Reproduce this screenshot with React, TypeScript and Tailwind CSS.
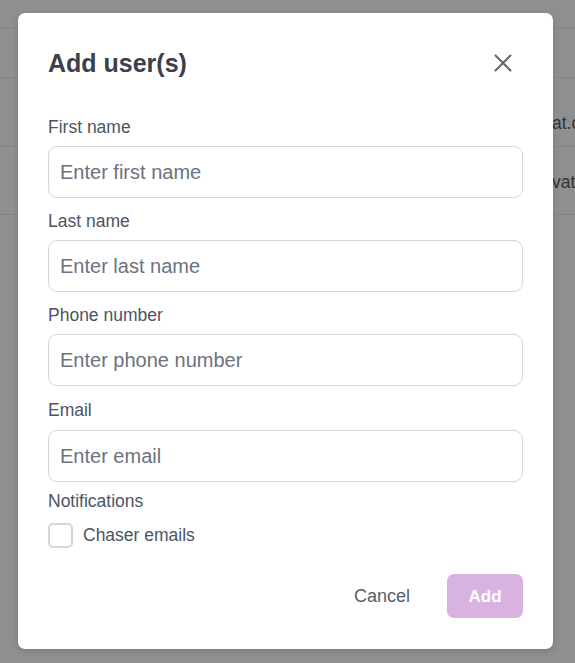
import React from "react";

const fields = [
  { label: "First name", placeholder: "Enter first name", extra: false },
  { label: "Last name", placeholder: "Enter last name", extra: false },
  { label: "Phone number", placeholder: "Enter phone number", extra: false },
  { label: "Email", placeholder: "Enter email", extra: true },
];

function Field({ label, placeholder, extra }: { label: string; placeholder: string; extra: boolean }) {
  return (
    <div className={extra ? "mt-px flex flex-col" : "flex flex-col"}>
      <label className="text-[17.5px] leading-6 text-[#4b5563]">{label}</label>
      <input
        placeholder={placeholder}
        className={`${extra ? "mt-2" : "mt-[7px]"} h-[52px] w-full rounded-[9px] border border-[#d3d7de] bg-white px-[11px] text-[20px] text-[#374151] placeholder:text-[#6b7280] outline-none`}
      />
    </div>
  );
}

export default function App() {
  return (
    <div className="relative h-[663px] w-[575px] overflow-hidden bg-[#8f8f8f] font-['Liberation_Sans',Arial,sans-serif]">
      {/* page behind the overlay */}
      <div className="flex flex-col">
        <div className="h-[29px] border-b border-[#858585]" />
        <div className="h-[49px] border-b border-[#858585]" />
        <div className="flex h-[69px] items-center border-b border-[#858585] pl-[552px] pt-[22px] whitespace-nowrap text-[17.5px] text-[#333]">
          at.c
        </div>
        <div className="flex h-[68px] items-center border-b border-[#858585] pl-[552px] pt-1 whitespace-nowrap text-[17.5px] text-[#333]">
          vat
        </div>
      </div>

      {/* dialog */}
      <div className="absolute left-[18px] top-[13px] flex w-[535px] flex-col rounded-[7px] bg-white px-[30px] pb-[31px] pt-[34px] shadow-[0_2px_6px_rgba(0,0,0,0.15)]">
        <div className="flex h-8 items-center justify-between">
          <h2 className="text-[25px] font-bold leading-8 text-[#3b404b]">Add user(s)</h2>
          <button className="mr-[11px] flex items-center justify-center text-[#5f656f]">
            <svg width="18" height="18" viewBox="0 0 18 18" fill="none" stroke="currentColor" strokeWidth="2" strokeLinecap="round">
              <path d="M1.5 1.5 L16.5 16.5 M16.5 1.5 L1.5 16.5" />
            </svg>
          </button>
        </div>

        <div className="mt-9 flex flex-col gap-[11px]">
          {fields.map((f) => (
            <Field key={f.label} {...f} />
          ))}
        </div>

        <div className="mt-[7px] text-[17.5px] leading-6 text-[#4b5563]">Notifications</div>
        <label className="mt-[9px] flex items-center gap-[10px]">
          <span className="h-[25px] w-[25px] rounded-[5px] border-2 border-[#d3d7de] bg-white" />
          <span className="text-[17.5px] text-[#4b5563]">Chaser emails</span>
        </label>

        <div className="mt-[26px] flex items-center justify-end gap-[37px]">
          <button className="text-[18px] text-[#526071]">Cancel</button>
          <button className="h-[44px] w-[76px] rounded-[7px] bg-[#d8b3e0] text-[17px] font-bold text-white">
            Add
          </button>
        </div>
      </div>
    </div>
  );
}
